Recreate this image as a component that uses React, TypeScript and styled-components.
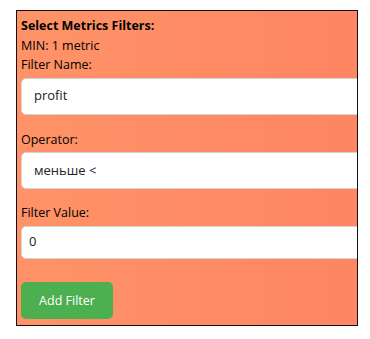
import { createGlobalStyle, styled } from "styled-components";

const GlobalStyle = createGlobalStyle`
  body {
    margin: 0;
    background: #ffffff;
    font-family: "Open Sans", "Noto Sans", sans-serif;
  }
`;

const Page = styled.div`
  padding: 10px 12px 0 16px;
`;

const Panel = styled.div`
  width: 342px;
  height: 316px;
  box-sizing: border-box;
  border: 1px solid #111;
  background: linear-gradient(to right, #ff9367, #ff8563);
  padding: 5px 0 0 4px;
  overflow: hidden;
  color: #000;
  font-size: 12.5px;
  line-height: 19.5px;
`;

const Title = styled.div`
  font-weight: 700;
`;

const Line = styled.div``;

const Field = styled.div<{ $gap: number }>`
  margin-bottom: ${(p) => p.$gap}px;
`;

const Label = styled.label`
  display: block;
  margin-bottom: 3px;
`;

const TextInput = styled.div<{ $h: number; $pad: number }>`
  height: ${(p) => p.$h}px;
  width: 360px;
  box-sizing: border-box;
  background: #fff;
  border: 1px solid #d4d4d4;
  border-radius: 5px;
  padding: 0 ${(p) => p.$pad}px;
  display: flex;
  align-items: center;
  font-size: 13px;
  color: #222;
`;

const Button = styled.button`
  width: 92px;
  height: 37px;
  border: none;
  border-radius: 5px;
  background: #4caf50;
  color: #fff;
  font-family: inherit;
  font-size: 12.5px;
  padding: 0;
`;

export default function App() {
  return (
    <>
      <GlobalStyle />
      <Page>
        <Panel>
          <Title>Select Metrics Filters:</Title>
          <Line>MIN: 1 metric</Line>
          <Field $gap={15}>
            <Label>Filter Name:</Label>
            <TextInput $h={37} $pad={12}>profit</TextInput>
          </Field>
          <Field $gap={14}>
            <Label>Operator:</Label>
            <TextInput $h={37} $pad={12}>меньше &lt;</TextInput>
          </Field>
          <Field $gap={23}>
            <Label>Filter Value:</Label>
            <TextInput $h={33} $pad={7}>0</TextInput>
          </Field>
          <Button>Add Filter</Button>
        </Panel>
      </Page>
    </>
  );
}
